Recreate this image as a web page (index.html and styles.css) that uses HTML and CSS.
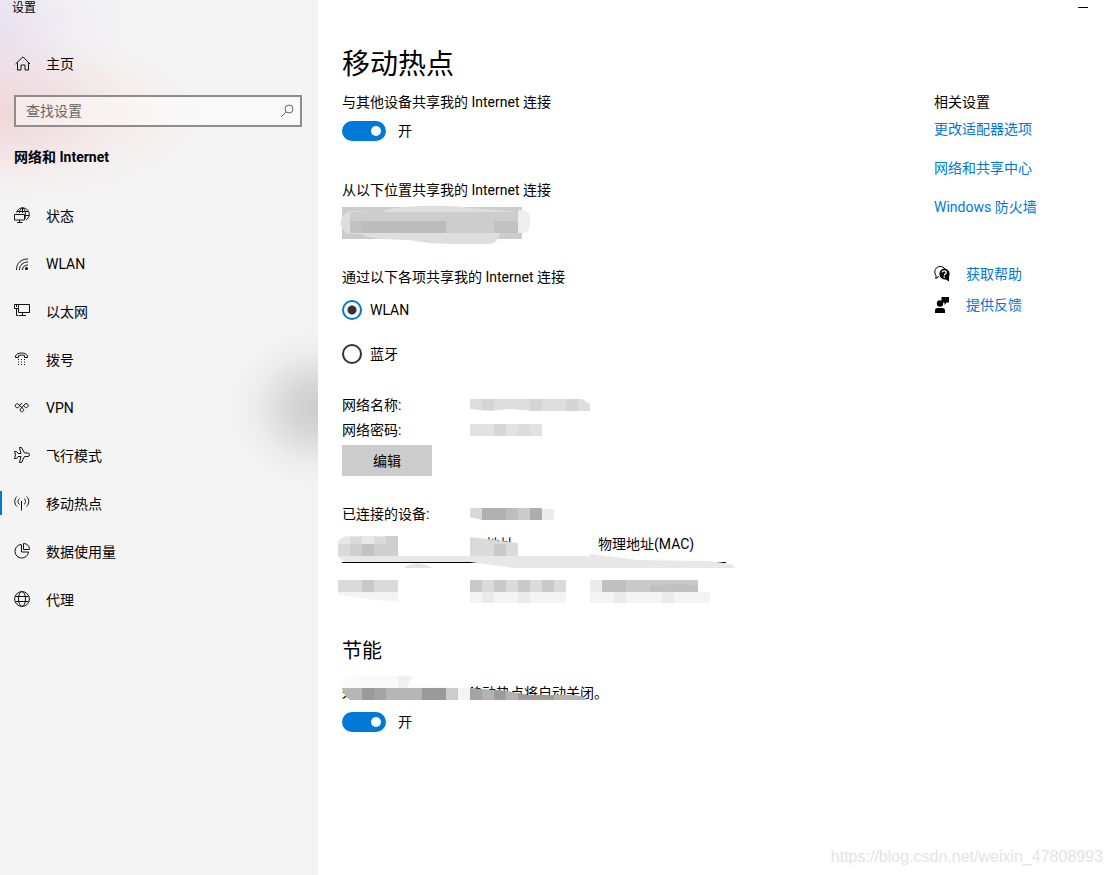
FILE: index.html
```
<!DOCTYPE html>
<html lang="zh-CN">
<head>
  <meta charset="UTF-8">
  <meta name="viewport" content="width=device-width, initial-scale=1">
  <title>设置</title>
  <link rel="stylesheet" href="styles.css">
</head>
<body>
  <aside class="sidebar">
    <div class="titlebar">设置</div>
    <a class="nav-item home" href="#">
      <svg class="icon" viewBox="0 0 16 16"><path d="M1.500 8 9 .8 16 8M3.500 6.500v7.500h3.500V9h4v5h3.500V6.500"/></svg>
      主页
    </a>
    <div class="search">
      <input type="text" placeholder="查找设置" aria-label="查找设置">
      <svg viewBox="0 0 14 14"><circle cx="9" cy="5" r="4"/><path d="M6 8 1 13"/></svg>
    </div>
    <h2 class="group">网络和 Internet</h2>
    <nav>
      <a class="nav-item" href="#">
        <svg class="icon" viewBox="0 0 16 16"><path d="M2.500 5.500A6.500 6.500 0 1 1 12 13M3 4.500h11.500M11 8.500h4.500M8.500.5C6.500 2 5.500 3.500 5.500 6M8.500.5C10.500 2 11.500 4 11.500 7.500S11 11.500 10.500 12.500M8.500.5V6M.5 7.500h10v5.500H.5zM5.500 13v2M3 15.500h5.500"/></svg>
        状态
      </a>
      <a class="nav-item" href="#">
        <svg class="icon" viewBox="0 0 16 16"><path d="M2.500 15C2.500 8 7 4 14 4M5.500 15C5.500 10 9 7 14 7M8.500 15c0-3 2-5 5.500-5"/><circle class="solid" cx="12.500" cy="13.500" r="1.500"/></svg>
        WLAN
      </a>
      <a class="nav-item" href="#">
        <svg class="icon" viewBox="0 0 16 16"><path d="M.5 1.500h4v4h-4zM2.500 5.500v7M2.500 2v2M4.500 1.500h11v8h-11V5.500M2.500 12.500h2M8.500 9.500v3M5 12.500h7"/></svg>
        以太网
      </a>
      <a class="nav-item" href="#">
        <svg class="icon" viewBox="0 0 16 16"><path d="M1.500 6.500V5C3 1 12 1 13.500 5v1.500h-3V4.500C9 4 6 4 4.500 4.500v2z"/><path d="M4 8.500h1m2 0h1m2 0h1M4 11h1m2 0h1m2 0h1M4 13.500h1m2 0h1m2 0h1"/></svg>
        拨号
      </a>
      <a class="nav-item" href="#">
        <svg class="icon" viewBox="0 0 16 16"><path d="M4.200 5A2 2 0 1 0 4.200 8.500C5.500 7 6 5 8 4.200M4.200 5C5.500 6.500 6.500 7.500 9 9.500c1.800 2-.2 3.800-1.700 3.200-1.800-.7-1.300-2.700 0-3.700L11 5a2 2 0 1 1 .5 3.500L9 6"/></svg>
        VPN
      </a>
      <a class="nav-item" href="#">
        <svg class="icon" viewBox="0 0 16 16"><path d="M5.500.5h2L10.500 6H14c2 0 2 3.500 0 3.500h-3.500l-3 6h-2l1.500-6H4L2.500 11.500h-2L1.500 8 .5 4.500h2L4 6.500h3z"/></svg>
        飞行模式
      </a>
      <a class="nav-item active" href="#">
        <svg class="icon" viewBox="0 0 16 16"><path d="M3 1.500c-3 2.500-3 7.500 0 10M5.500 3.500c-2 1.500-2 4.500 0 6M10 3.500c2 1.500 2 4.500 0 6M12.500 1.500c3 2.500 3 7.500 0 10M7.500 6v9.500"/></svg>
        移动热点
      </a>
      <a class="nav-item" href="#">
        <svg class="icon" viewBox="0 0 16 16"><path d="M7 1.500a6.800 6.800 0 1 0 7.500 7.500H7.500V1.500M9.500.5c3.500 0 6 2.500 6 6h-6z"/></svg>
        数据使用量
      </a>
      <a class="nav-item" href="#">
        <svg class="icon" viewBox="0 0 16 16"><circle cx="8" cy="8" r="7.400"/><ellipse cx="8" cy="8" rx="3.500" ry="7.400"/><path d="M1.500 5.500h13M1.500 10.500h13"/></svg>
        代理
      </a>
    </nav>
  </aside>

  <main>
    <header class="window-bar">
      <button type="button" class="minimize" aria-label="最小化"></button>
    </header>
    <div class="columns">
      <div class="settings">
        <h1>移动热点</h1>
        <p>与其他设备共享我的 Internet 连接</p>
        <label class="switch"><input type="checkbox" checked>开</label>

        <section>
          <label for="source">从以下位置共享我的 Internet 连接</label>
          <div class="source">
            <select id="source"><option></option></select>
            <svg class="mask" viewBox="0 0 190 40" width="190" height="40">
              <path fill="#dedede" d="M9 6C-2 11-2 23 9 29h13c5 5 30 6 48 6 15 3 30 4 45 4h35c6-1 9-5 10-11h18V7L130 3C110 0 70 0 50 4L40 7z"/>
              <path fill="#cdcdcd" d="M10 7h168v21H10z"/>
              <path fill="#c2c2c2" d="M10 16h36v12H10zM154 16h24v12h-24z"/>
              <path fill="#bcbcbc" d="M22 16h84v12H22z"/>
              <path fill="#eee" d="M178 5h6q6 3 6 8v9q-1 5-6 6h-6z"/>
            </svg>
          </div>
        </section>

        <fieldset>
          <legend>通过以下各项共享我的 Internet 连接</legend>
          <label class="radio"><input type="radio" name="via" checked>WLAN</label>
          <label class="radio"><input type="radio" name="via">蓝牙</label>
        </fieldset>

        <dl class="network">
          <dt>网络名称:</dt>
          <dd>
            <svg viewBox="0 0 120 12" width="120" height="12">
              <path fill="#dedede" d="M0 0h112l8 5v7H64L40 10 20 12 0 10z"/>
              <path fill="#d5d5d5" d="M12 0h12v11H12zM60 0h12v12H60zM96 0h12v12H96z"/>
            </svg>
          </dd>
          <dt>网络密码:</dt>
          <dd>
            <svg viewBox="0 0 72 12" width="72" height="12">
              <path fill="#e2e2e2" d="M0 0h72v12H0z"/>
              <path fill="#d6d6d6" d="M24 0h12v12H24z"/>
              <path fill="#dcdcdc" d="M48 0h12v12H48z"/>
            </svg>
          </dd>
        </dl>
        <button type="button" class="edit">编辑</button>

        <dl class="network connected">
          <dt>已连接的设备:</dt>
          <dd>
            <svg viewBox="0 0 84 12" width="84" height="12">
              <path fill="#d8d8d8" d="M0 0h12v12L0 9z"/>
              <path fill="#b0b0b0" d="M12 0h24v12H12z"/>
              <path fill="#bdbdbd" d="M36 0h12v12H36z"/>
              <path fill="#cbcbcb" d="M48 0h12v12H48z"/>
              <path fill="#adadad" d="M60 0h12v12H60z"/>
              <path fill="#ebebeb" d="M72 1h12v11H72z"/>
            </svg>
          </dd>
        </dl>

        <div class="devices">
          <table>
            <thead>
              <tr><th></th><th>IP 地址</th><th>物理地址(MAC)</th></tr>
            </thead>
            <tbody>
              <tr><td></td><td></td><td></td></tr>
            </tbody>
          </table>
          <svg class="mask" viewBox="0 0 396 72" width="396" height="72">
            <path fill="#fff" d="M132 0h16v10h-16z"/>
            <path fill="#e8e8e8" d="M0 8q2-6 12-6h48v20h192v-2l24 3 24 3 64 1h8l14 2 10 2v3H175l-43-6H8Q2 26 0 22z"/>
            <path fill="#dadada" d="M0 10h12v12H0zM12 3h12v7H12zM36 3h12v7H36z"/>
            <path fill="#cfcfcf" d="M12 10h48v12H12zM48 2h12v8H48z"/>
            <path fill="#c3c3c3" d="M24 10h12v12H24z"/>
            <path fill="#dadada" d="M132 3l16 2 32 4v13h-48z"/>
            <path fill="#c9c9c9" d="M156 10h12v12h-12z"/>
            <path fill="#e3e3e3" d="M66 34q12-9 28 0z"/>
            <path fill="#dadada" d="M0 46h60v12H0zM132 46h96v12h-96z"/>
            <path fill="#c9c9c9" d="M24 46h12v12H24zM132 46h12v12h-12zM156 46h12v12h-12zM180 46h12v12h-12zM204 46h12v12h-12z"/>
            <path fill="#f4f4f4" d="M0 58h60v10L30 65 0 61zM132 58h96v11h-96zM252 58h120v11H252z"/>
            <path fill="#ebebeb" d="M144 58h12v11h-12zM180 58h12v11h-12zM252 46h12v12h-12zM276 58h12v11h-12zM324 58h12v11h-12z"/>
            <path fill="#cacaca" d="M264 46h96v12h-96z"/>
            <path fill="#c0c0c0" d="M264 46h24v12h-24zM312 51l32-1 16 2v6h-48z"/>
          </svg>
        </div>

        <h2>节能</h2>
        <p class="saving">
          未连接任何设备时，移动热点将自动关闭。
          <svg class="mask" viewBox="0 0 250 28" width="250" height="28">
            <path fill="#fff" d="M8 9h121v17H8z"/>
            <path fill="#fafafa" d="M2 12Q4 1 13 1h60l-5 8 45 3h18v2H2z"/>
            <path fill="#f0f0f0" d="M58 1h15l-5 8v4H58z"/>
            <path fill="#b6b6b6" d="M2 13h116v12H10Q3 20 2 13z"/>
            <path fill="#9a9a9a" d="M22 13h12v12H22zM82 13h24v12H82z"/>
            <path fill="#a4a4a4" d="M34 13h12v12H34zM130 13l12 1v11h-12z"/>
            <path fill="#ccc" d="M106 13h12v12h-12z"/>
            <path fill="#f4f4f4" d="M118 13h12v12h-12z"/>
            <path fill="#b3b3b3" d="M142 14l24 2 22 4h46q12 1 12 5H142z"/>
            <path fill="#9c9c9c" d="M154 15l12 1v9h-12zM178 18l10 2h26v5h-36z"/>
          </svg>
        </p>
        <label class="switch"><input type="checkbox" checked>开</label>
      </div>

      <aside class="related">
        <h3>相关设置</h3>
        <a href="#">更改适配器选项</a>
        <a href="#">网络和共享中心</a>
        <a href="#">Windows 防火墙</a>
        <div class="support">
          <svg viewBox="0 0 16 16"><path fill="none" stroke="#000" d="M2 12.500V9.500C-1 5 2 .5 6 .5c2 0 4 1 5 2.500M1.500 12.500 5 10.500"/><path d="M10 2.500a5.500 5.500 0 0 1 5 8v5L12 13.500A5.500 5.500 0 1 1 10 2.500z"/><path fill="none" stroke="#fff" stroke-width="1.300" d="M8.200 6.500c0-2.200 4-2.200 4 0 0 1.500-2 1.200-2 3M10.200 10.500v1.500"/></svg>
          <a href="#">获取帮助</a>
        </div>
        <div class="support">
          <svg viewBox="0 0 16 16"><path d="M7.500 0H15v5.500h-2.500L10.500 8V5.500h-3zM1 16v-2.500Q1 11 3.500 11h5q2.500 0 2.500 2.500V16z"/><circle cx="6" cy="6.500" r="3.200"/></svg>
          <a href="#">提供反馈</a>
        </div>
      </aside>
    </div>
    <div class="watermark">https://blog.csdn.net/weixin_47808993</div>
  </main>
</body>
</html>
```
FILE: styles.css
```
*, *::before, *::after { box-sizing: border-box; }

body {
  margin: 0;
  display: flex;
  min-height: 100vh;
  background: #fff;
  color: #000;
  font-family: Roboto, "Noto Sans CJK SC", sans-serif;
  font-size: 14px;
  line-height: 20px;
}

h1, h2, h3, p, dl, dd { margin: 0; font-weight: 400; }
a { color: #0078d7; text-decoration: none; }
svg { display: block; flex: none; }

/* 侧边栏 */
.sidebar {
  flex: none;
  width: 318px;
  background:
    radial-gradient(ellipse 90px 80px at 318px 408px, rgba(0,0,0,.16), rgba(0,0,0,.12) 30%, rgba(0,0,0,.03) 70%, transparent),
    radial-gradient(ellipse 210px 90px at 0 115px, rgba(238,170,170,.34), rgba(245,185,185,.22) 45%, rgba(250,200,200,.06) 80%, transparent),
    radial-gradient(ellipse 130px 150px at 0 30px, rgba(200,170,225,.26), rgba(210,190,225,.1) 55%, transparent),
    #f4f4f4;
}
.titlebar {
  height: 16px;
  padding-left: 12px;
  font-size: 12px;
  line-height: 16px;
}
.nav-item {
  display: flex;
  align-items: center;
  gap: 16px;
  height: 48px;
  padding-left: 14px;
  color: #000;
  position: relative;
}
.nav-item:hover { background: rgba(0,0,0,.06); }
.home { margin-top: 24px; }
.icon {
  width: 16px;
  height: 16px;
  margin-bottom: 2px;
  fill: none;
  stroke: #111;
}
.home .icon { margin-bottom: 0; }
.icon .solid { fill: #000; stroke: none; }
.active::before {
  content: '';
  position: absolute;
  left: 0;
  top: 11px;
  width: 2px;
  height: 24px;
  background: #0078d7;
}

.search {
  display: flex;
  align-items: center;
  height: 32px;
  margin: 7px 16px 0 14px;
  padding: 0 6px 0 10px;
  border: 2px solid #8f8c8c;
  background: rgba(255,255,255,.45);
}
.search input {
  flex: 1;
  min-width: 0;
  padding: 0;
  border: none;
  outline: none;
  background: none;
  font: inherit;
}
.search input::placeholder { color: #666; opacity: 1; }
.search svg { width: 14px; height: 14px; fill: none; stroke: #666; }
.group {
  margin: 20px 0 25px 14px;
  font-size: 14px;
  font-weight: 700;
}

/* 主区域 */
main { flex: 1; min-width: 0; position: relative; }
.window-bar {
  display: flex;
  justify-content: flex-end;
  height: 16px;
  padding-right: 24px;
}
.minimize {
  width: 10px;
  height: 8px;
  padding: 0;
  border: none;
  border-bottom: 1px solid #000;
  background: none;
}
.columns {
  display: flex;
  justify-content: space-between;
  padding: 29px 24px 40px;
}
.settings { width: 400px; }
h1 { font-size: 28px; line-height: 40px; margin-bottom: 7px; }
.settings h2 { font-size: 20px; line-height: 28px; }

.switch, .radio {
  display: flex;
  align-items: center;
  width: max-content;
}
.switch { gap: 12px; margin-top: 9px; }
.switch input {
  appearance: none;
  position: relative;
  width: 44px;
  height: 20px;
  margin: 0;
  border-radius: 10px;
  background: #999;
}
.switch input::before {
  content: '';
  position: absolute;
  top: 5px;
  left: 5px;
  width: 10px;
  height: 10px;
  border-radius: 50%;
  background: #fff;
}
.switch input:checked { background: #0078d7; }
.switch input:checked::before { left: 29px; }

section { margin-top: 39px; }
section label { display: block; }
.source { position: relative; height: 40px; margin-top: 7px; }
.source select {
  appearance: none;
  display: block;
  width: 180px;
  height: 32px;
  border: none;
  background: #ccc;
}
.mask { position: absolute; pointer-events: none; }
.source .mask { left: -2px; top: -2px; }

fieldset { margin: 20px 0 0; padding: 0; border: none; }
legend { padding: 0; }
.radio { gap: 8px; margin-top: 13px; }
.radio + .radio { margin-top: 24px; }
.radio input {
  appearance: none;
  width: 20px;
  height: 20px;
  margin: 0;
  border: 2px solid #333;
  border-radius: 50%;
}
.radio input:checked {
  border-color: #0078d7;
  background: radial-gradient(circle, #333 4px, transparent 5px);
}

.network {
  display: grid;
  grid-template-columns: 128px 1fr;
  align-items: center;
  row-gap: 5px;
  margin-top: 31px;
}
.edit {
  display: block;
  width: 90px;
  height: 31px;
  margin-top: 5px;
  border: none;
  background: #ccc;
  font: inherit;
}
.connected { margin-top: 28px; }

.devices { position: relative; margin-top: 10px; }
.devices .mask { left: -4px; top: 0; }
table {
  width: 384px;
  table-layout: fixed;
  border-collapse: collapse;
}
th {
  height: 28px;
  padding: 0 0 7px;
  border-bottom: 1px solid #000;
  font-weight: 400;
  text-align: left;
}
td { height: 44px; }

.settings h2 { margin-top: 31px; }
.saving { position: relative; margin-top: 18px; white-space: nowrap; }
.saving .mask { left: -2px; top: -8px; }

/* 相关设置 */
.related { width: 154px; padding-top: 47px; }
.related h3 { font-size: 14px; margin-bottom: 7px; }
.related > a { display: block; margin-bottom: 19px; }
.support { display: flex; align-items: center; gap: 16px; margin-bottom: 11px; }
.related > a + .support { margin-top: 47px; }
.support svg { width: 16px; height: 16px; }

.watermark {
  position: absolute;
  right: 9px;
  bottom: 8px;
  color: #e4e4e4;
  font-family: "Liberation Sans", sans-serif;
  font-size: 16px;
}
```
